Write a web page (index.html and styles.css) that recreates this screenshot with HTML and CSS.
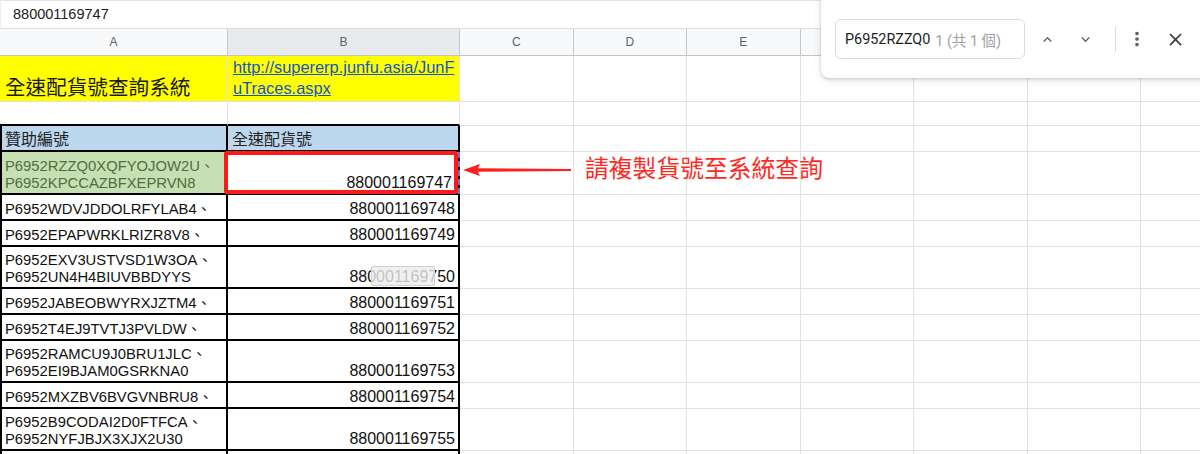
FILE: index.html
```html
<!DOCTYPE html>
<html lang="zh-Hant-TW">
<head>
  <meta charset="UTF-8">
  <title>全速配貨號查詢系統</title>
  <link rel="stylesheet" href="styles.css">
</head>
<body>
  <div class="app">
    <div class="formula-bar">880001169747</div>

    <table class="grid">
      <colgroup>
        <col class="col-a">
        <col class="col-b">
        <col class="col-n"><col class="col-n"><col class="col-n"><col class="col-n">
        <col class="col-n"><col class="col-n"><col class="col-n">
      </colgroup>
      <thead>
        <tr>
          <th>A</th><th class="active">B</th><th>C</th><th>D</th><th>E</th>
          <th></th><th></th><th></th><th></th>
        </tr>
      </thead>
      <tbody>
        <tr class="row-title">
          <td class="yellow title">全速配貨號查詢系統</td>
          <td class="yellow link"><a href="#">http://supererp.junfu.asia/JunF<br>uTraces.aspx</a></td>
          <td></td><td></td><td></td><td></td><td></td><td></td><td></td>
        </tr>
        <tr class="row-gap">
          <td class="frame-top"></td><td class="frame-top"></td>
          <td></td><td></td><td></td><td></td><td></td><td></td><td></td>
        </tr>
        <tr class="row-1">
          <td class="fa head">贊助編號</td><td class="fb head">全速配貨號</td>
          <td></td><td></td><td></td><td></td><td></td><td></td><td></td>
        </tr>
        <tr class="row-found">
          <td class="fa id found">P6952RZZQ0XQFYOJOW2U、<br>P6952KPCCAZBFXEPRVN8</td>
          <td class="fb num copied">880001169747</td>
          <td></td><td></td><td></td><td></td><td></td><td></td><td></td>
        </tr>
        <tr class="row-1">
          <td class="fa id">P6952WDVJDDOLRFYLAB4、</td><td class="fb num">880001169748</td>
          <td></td><td></td><td></td><td></td><td></td><td></td><td></td>
        </tr>
        <tr class="row-1">
          <td class="fa id">P6952EPAPWRKLRIZR8V8、</td><td class="fb num">880001169749</td>
          <td></td><td></td><td></td><td></td><td></td><td></td><td></td>
        </tr>
        <tr class="row-2">
          <td class="fa id">P6952EXV3USTVSD1W3OA、<br>P6952UN4H4BIUVBBDYYS</td>
          <td class="fb num hovered">880001169750<span class="hover-chip"></span></td>
          <td></td><td></td><td></td><td></td><td></td><td></td><td></td>
        </tr>
        <tr class="row-1">
          <td class="fa id">P6952JABEOBWYRXJZTM4、</td><td class="fb num">880001169751</td>
          <td></td><td></td><td></td><td></td><td></td><td></td><td></td>
        </tr>
        <tr class="row-1">
          <td class="fa id">P6952T4EJ9TVTJ3PVLDW、</td><td class="fb num">880001169752</td>
          <td></td><td></td><td></td><td></td><td></td><td></td><td></td>
        </tr>
        <tr class="row-2">
          <td class="fa id">P6952RAMCU9J0BRU1JLC、<br>P6952EI9BJAM0GSRKNA0</td>
          <td class="fb num">880001169753</td>
          <td></td><td></td><td></td><td></td><td></td><td></td><td></td>
        </tr>
        <tr class="row-1">
          <td class="fa id">P6952MXZBV6BVGVNBRU8、</td><td class="fb num">880001169754</td>
          <td></td><td></td><td></td><td></td><td></td><td></td><td></td>
        </tr>
        <tr class="row-2">
          <td class="fa id">P6952B9CODAI2D0FTFCA、<br>P6952NYFJBJX3XJX2U30</td>
          <td class="fb num">880001169755</td>
          <td></td><td></td><td></td><td></td><td></td><td></td><td></td>
        </tr>
        <tr class="row-2">
          <td class="fa id"></td><td class="fb num"></td>
          <td></td><td></td><td></td><td></td><td></td><td></td><td></td>
        </tr>
      </tbody>
    </table>

    <!-- callout next to the copied cell -->
    <svg class="callout-arrow" viewBox="0 0 112 20" width="112" height="20">
      <polygon points="2,10 19,4 17,8.2 110,9.1 110,10.9 17,11.8 19,16" fill="#ff1f1f"/>
    </svg>
    <div class="callout-text">請複製貨號至系統查詢</div>

    <!-- find in sheet -->
    <div class="find-bar">
      <div class="find-input">
        <span class="find-query">P6952RZZQ0</span>
        <span class="find-count">1 (共 1 個)</span>
      </div>
      <button class="find-btn" title="上一個">
        <svg viewBox="0 0 24 24" width="17" height="17"><path d="M7.41 15.41L12 10.83l4.59 4.58L18 14l-6-6-6 6z"/></svg>
      </button>
      <button class="find-btn" title="下一個">
        <svg viewBox="0 0 24 24" width="17" height="17"><path d="M7.41 8.59L12 13.170l4.59-4.58L18 10l-6 6-6-6z"/></svg>
      </button>
      <span class="find-sep"></span>
      <button class="find-btn" title="更多">
        <svg viewBox="0 0 24 24" width="22" height="22"><path d="M12 8c1.1 0 2-.9 2-2s-.9-2-2-2-2 .9-2 2 .9 2 2 2zm0 2c-1.1 0-2 .9-2 2s.9 2 2 2 2-.9 2-2-.9-2-2-2zm0 6c-1.1 0-2 .9-2 2s.9 2 2 2 2-.9 2-2-.9-2-2-2z"/></svg>
      </button>
      <button class="find-btn close" title="關閉">
        <svg viewBox="0 0 24 24" width="21" height="21"><path d="M19 6.41L17.59 5 12 10.59 6.41 5 5 6.41 10.59 12 5 17.590 6.41 19 12 13.41 17.59 19 19 17.59 13.41 12z"/></svg>
      </button>
    </div>
  </div>
</body>
</html>
```

FILE: styles.css
```css
html, body {
  margin: 0;
  height: 454px;
  overflow: hidden;
  background: #fff;
}

body {
  font-family: "Liberation Sans", "Noto Sans CJK TC", sans-serif;
  color: #000;
}

.app {
  position: relative;
  width: 1200px;
  height: 454px;
  overflow: hidden;
}

.formula-bar {
  box-sizing: border-box;
  height: 29px;
  padding-left: 12px;
  border-top: 1px solid #e3e3e3;
  border-left: 1px solid #ececec;
  border-bottom: 1px solid #e0e0e0;
  font-size: 14.5px;
  line-height: 27px;
  color: #202124;
}

/* sheet grid */
.grid {
  table-layout: fixed;
  width: 1254.5px;
  border-collapse: separate;
  border-spacing: 0;
}

.col-a { width: 228px; }
.col-b { width: 232px; }
.col-n { width: 113.5px; }

.grid th {
  box-sizing: border-box;
  height: 27px;
  padding: 0;
  background: #f8f9fa;
  border-right: 1px solid #c7c7c7;
  border-bottom: 1px solid #c4c4c4;
  font-family: "Liberation Sans", sans-serif;
  font-weight: normal;
  font-size: 12px;
  color: #5f6368;
}

.grid th.active {
  background: #e8eaed;
}

.grid td {
  box-sizing: border-box;
  padding: 0 3px 2px 5px;
  border-right: 1px solid #e1e1e1;
  border-bottom: 1px solid #e1e1e1;
  vertical-align: bottom;
  white-space: nowrap;
  overflow: hidden;
  font-size: 15px;
  line-height: 17px;
}

.row-title { height: 46px; }
.row-gap { height: 24px; }
.row-1 { height: 26px; }
.row-found { height: 43px; }
.row-2 { height: 42px; }

.yellow {
  background: #ffff00;
}

.grid td.title {
  padding-bottom: 1px;
  font-family: "Noto Sans CJK TC", sans-serif;
  font-size: 20.6px;
  line-height: 28px;
  color: #1a1a1a;
}

.grid td.link {
  padding-bottom: 2px;
  font-size: 16.4px;
  line-height: 21px;
}

.link a {
  color: #1155cc;
  text-decoration: underline;
}

/* black frame around the lookup table */
.grid td.frame-top {
  border-bottom: 2px solid #000;
}

.grid td.fa {
  border-left: 2px solid #000;
  border-right: 2px solid #000;
  border-bottom: 2px solid #000;
}

.grid td.fb {
  border-right: 2px solid #000;
  border-bottom: 2px solid #000;
}

.grid td.head {
  background: #bdd7ee;
  padding-left: 3px;
  padding-bottom: 1px;
  font-family: "Noto Sans CJK TC", sans-serif;
  font-size: 16px;
  line-height: 22px;
  color: #222;
}

.grid td.fb.head {
  padding-left: 4px;
}

.grid td.id {
  padding-left: 3px;
  font-size: 14.8px;
  line-height: 16.5px;
  color: #111;
}

.grid td.found {
  background: #c6e0b4;
  color: #4f6f3d;
}

.grid td.num {
  text-align: right;
  padding-right: 3px;
  font-size: 16px;
  line-height: 17px;
  color: #111;
}

/* copied cell: dashed marquee plus the red highlight box */
.grid td.copied {
  position: relative;
  overflow: visible;
  padding-right: 6px;
}

.grid td.copied::before {
  content: "";
  position: absolute;
  top: 0;
  bottom: -1px;
  right: -2px;
  border-right: 2px dashed #4a7fe0;
}

.grid td.copied::after {
  content: "";
  position: absolute;
  left: -4px;
  top: -1px;
  right: 0;
  bottom: -1px;
  border: 4px solid #ff1a1a;
  border-radius: 3px;
}

.grid td.hovered {
  position: relative;
}

.hover-chip {
  position: absolute;
  left: 143px;
  top: 19px;
  width: 62px;
  height: 18px;
  background: rgba(236, 236, 236, 0.8);
  border: 1px solid #cfcfcf;
  border-radius: 2px;
}

.callout-arrow {
  position: absolute;
  left: 461px;
  top: 160px;
}

.callout-text {
  position: absolute;
  left: 585px;
  top: 152px;
  font-family: "Noto Sans CJK TC", sans-serif;
  font-size: 23.8px;
  line-height: 30px;
  color: #ff2a1f;
}

/* find bar */
.find-bar {
  position: absolute;
  top: -10px;
  left: 821px;
  width: 400px;
  height: 88px;
  box-sizing: border-box;
  padding: 10px 0 0 14px;
  display: flex;
  align-items: center;
  background: #fff;
  border-radius: 8px;
  box-shadow: 0 1px 3px rgba(60, 64, 67, 0.25), 0 2px 8px rgba(60, 64, 67, 0.12);
  font-family: Roboto, "Noto Sans CJK TC", sans-serif;
}

.find-input {
  box-sizing: border-box;
  width: 190px;
  height: 40px;
  margin-right: 3px;
  padding-left: 9px;
  display: flex;
  align-items: center;
  gap: 5px;
  border: 1px solid #dadce0;
  border-radius: 6px;
  font-size: 14.4px;
  white-space: nowrap;
  overflow: hidden;
}

.find-query {
  color: #202124;
}

.find-count {
  color: #9aa0a6;
}

.find-btn {
  width: 38px;
  height: 38px;
  padding: 0;
  border: none;
  background: none;
  display: flex;
  align-items: center;
  justify-content: center;
  fill: #5f6368;
}

.find-btn.close {
  fill: #3c4043;
}

.find-sep {
  width: 1px;
  height: 25px;
  margin: 0 2px 0 11px;
  background: #dadce0;
}
```
